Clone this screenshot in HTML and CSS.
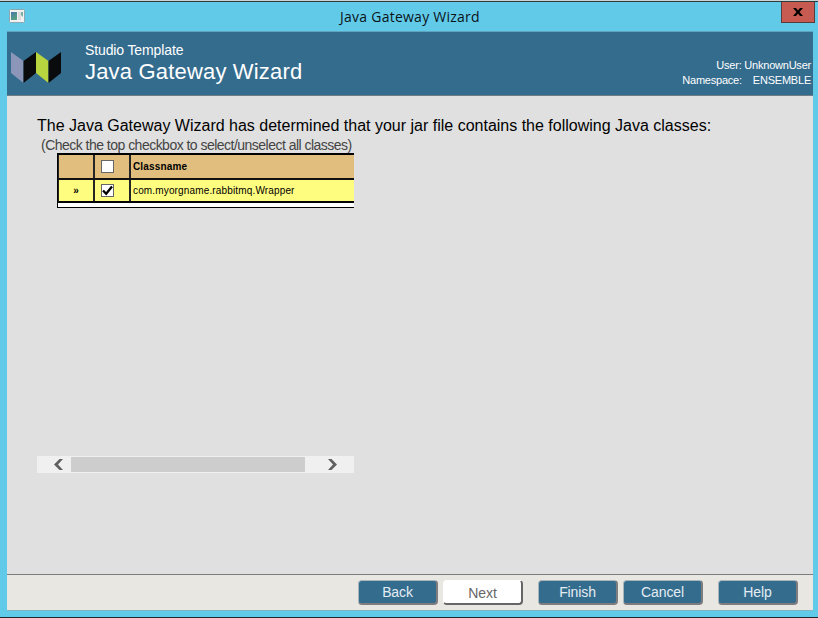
FILE: index.html
```html
<!DOCTYPE html>
<html lang="en">
<head>
<meta charset="utf-8">
<title>Java Gateway Wizard</title>
<link rel="stylesheet" href="styles.css">
</head>
<body>
<div class="window">
  <div class="titlebar">
    <svg class="app-icon" width="16" height="14" viewBox="0 0 16 14">
      <defs><linearGradient id="pane" x1="0" y1="0" x2="0.5" y2="1"><stop offset="0" stop-color="#4a78a8"/><stop offset="1" stop-color="#58a080"/></linearGradient></defs>
      <rect x=".5" y=".5" width="15" height="13" rx="1" fill="#f1f1f1" stroke="#8aa8b2"/>
      <rect x="2" y="3" width="6" height="8" fill="url(#pane)"/>
      <rect x="9" y="3" width="3" height="8" fill="#ddd"/>
      <path d="M12 3h2v5l-2-2z" fill="#78b0a4"/>
    </svg>
    <div class="caption"><span>Java Gateway Wizard</span></div>
    <button class="close" aria-label="Close"><svg width="10" height="8" viewBox="0 0 10 8"><path d="M0 0h3l2 2.4L7 0h3L6.5 4 10 8H7L5 5.6 3 8H0l3.500-4z" fill="#000"/></svg></button>
  </div>
  <div class="client">
    <header class="banner">
      <svg class="logo" width="51" height="31" viewBox="0 0 51 31">
        <path d="M0 0l12.500 9v22L0 21z" fill="#8c96b8"/>
        <path d="M12.500 9L25 0v21L12.500 31z" fill="#090b0d"/>
        <path d="M25 0l12.500 9v22L25 21z" fill="#b6d53f"/>
        <path d="M37.500 9L50 0v21L37.500 31z" fill="#090b0d"/>
      </svg>
      <div class="heading">
        <div class="kicker"><span>Studio Template</span></div>
        <h1><span>Java Gateway Wizard</span></h1>
      </div>
      <div class="session">
        <div><span class="user">User: UnknownUser</span></div>
        <div><span class="label">Namespace:</span><span class="value">ENSEMBLE</span></div>
      </div>
    </header>
    <main class="content">
      <p class="lead"><span>The Java Gateway Wizard has determined that your jar file contains the following Java classes:</span></p>
      <p class="hint"><span>(Check the top checkbox to select/unselect all classes)</span></p>
      <div class="list">
        <div class="grid">
          <div class="row head">
            <div class="cell"></div>
            <div class="cell"><span class="check"></span></div>
            <div class="cell name"><span>Classname</span></div>
          </div>
          <div class="row item">
            <div class="cell mark">»</div>
            <div class="cell"><span class="check"><svg width="11" height="11" viewBox="0 0 11 11"><path d="M1 5.500L4.200 8.800 10 1.500" fill="none" stroke="#000" stroke-width="2.300"/></svg></span></div>
            <div class="cell name"><span>com.myorgname.rabbitmq.Wrapper</span></div>
          </div>
        </div>
        <div class="scrollbar">
          <svg width="9" height="11" viewBox="0 0 9 11"><path d="M5.500 0H9L4 5.500 9 11H5.500L0 5.500z" fill="#606060"/></svg>
          <div class="thumb"></div>
          <svg width="9" height="11" viewBox="0 0 9 11"><path d="M3.500 0H0L5 5.500 0 11H3.500L9 5.500z" fill="#606060"/></svg>
        </div>
      </div>
    </main>
    <footer class="actions">
      <button class="btn">Back</button>
      <button class="btn next">Next</button>
      <button class="btn finish">Finish</button>
      <button class="btn">Cancel</button>
      <button class="btn help">Help</button>
    </footer>
  </div>
</div>
</body>
</html>
```
FILE: styles.css
```css
* { box-sizing: border-box; }
body { margin: 0; font-family: "Liberation Sans", Arial, sans-serif; overflow: hidden; }
p, h1 { margin: 0; font-weight: normal; }
span { white-space: nowrap; }
.window {
  width: 818px;
  height: 618px;
  background: #62cae9;
  border-top: 1px solid #c9d3d3;
  border-bottom: 1px solid #20272c;
  box-shadow: inset 0 1px #303a3d;
  padding: 1px 5px 6px 7px;
}
.titlebar { display: flex; height: 29px; align-items: flex-start; }
.app-icon { margin: 7px 0 0 2px; }
.caption {
  flex: 1;
  padding-left: 315px;
  font: 14px/29px "Open Sans", sans-serif;
  color: #0a1419;
}
.caption span { letter-spacing: 0.25px; }
.close {
  width: 34px;
  height: 21px;
  margin-right: -2px;
  padding: 0;
  display: flex;
  align-items: center;
  justify-content: center;
  border: 1px solid #5b3b3a;
  border-top: 0;
  background: #c75b51;
}
.client { width: 806px; border-top: 1px solid #5fa5c0; border-bottom: 1px solid #7fb4c4; }
.banner {
  display: flex;
  height: 64px;
  background: #346c8e;
  border-bottom: 1px solid #707c85;
  color: #fff;
}
.logo { margin: 20px 0 0 4px; }
.heading { margin-left: 23px; padding-top: 10px; }
.kicker { font-size: 14px; line-height: 17px; }
.kicker span { letter-spacing: -0.12px; }
h1 { font-size: 22px; line-height: 26px; letter-spacing: 0.18px; }
.session { margin-left: auto; padding: 26px 2px 0 0; font-size: 11px; line-height: 15px; text-align: right; letter-spacing: -0.22px; }
.value { margin-left: 11px; }
.content { height: 478px; padding: 19px 30px 0; background: #e0e0e0; }
.lead { font-size: 16px; line-height: 22px; color: #000; }
.hint { padding-left: 4px; font-size: 14px; line-height: 16px; letter-spacing: -0.52px; color: #444; }
.list { width: 317px; height: 320px; display: flex; flex-direction: column; justify-content: space-between; }
.grid {
  margin-left: 20px;
  height: 55px;
  background: #fff;
  border: 1px solid #000;
  border-top-width: 2px;
  border-right: 0;
  font-size: 10px;
  color: #000;
}
.row { display: grid; grid-template-columns: 36px 36px 1fr; border-left: 1px solid #222; }
.head { height: 25px; background: #e2be7e; border-bottom: 2px solid #111; font-weight: bold; }
.item { height: 23px; background: #fffd80; border-bottom: 2px solid #000; }
.cell { display: flex; align-items: center; justify-content: center; border-right: 2px solid #252525; }
.name { justify-content: flex-start; padding-left: 2px; border: 0; letter-spacing: 0.15px; }
.mark { font-weight: bold; }
.check { width: 13px; height: 13px; display: block; margin-right: 9px; background: #fff; border: 1px solid #666; }
.check svg { display: block; }
.scrollbar { display: flex; height: 17px; align-items: center; padding: 0 17px; background: #f0f0f0; }
.thumb { width: 234px; height: 15px; margin: 0 23px 0 8px; background: #cdcdcd; }
.actions {
  display: flex;
  height: 36px;
  padding: 5px 0 0 351px;
  background: #e8e7e2;
  border-top: 1px solid #7d7d80;
}
.btn {
  width: 80px;
  height: 25px;
  margin-right: 5px;
  padding: 0 0 1px;
  font: 14px "Liberation Sans", Arial, sans-serif;
  letter-spacing: -0.1px;
  color: #e4edf3;
  background: #346c8e;
  border: 1px solid #a9b5ba;
  border-right: 2px solid #7d7d7f;
  border-bottom: 2px solid #7d7d7f;
  border-radius: 4px;
}
.next { margin-right: 15px; padding: 1px 0 0; color: #666; background: #fff; border-color: #fff #666 #666 #fff; }
.help { margin-left: 10px; }
```
